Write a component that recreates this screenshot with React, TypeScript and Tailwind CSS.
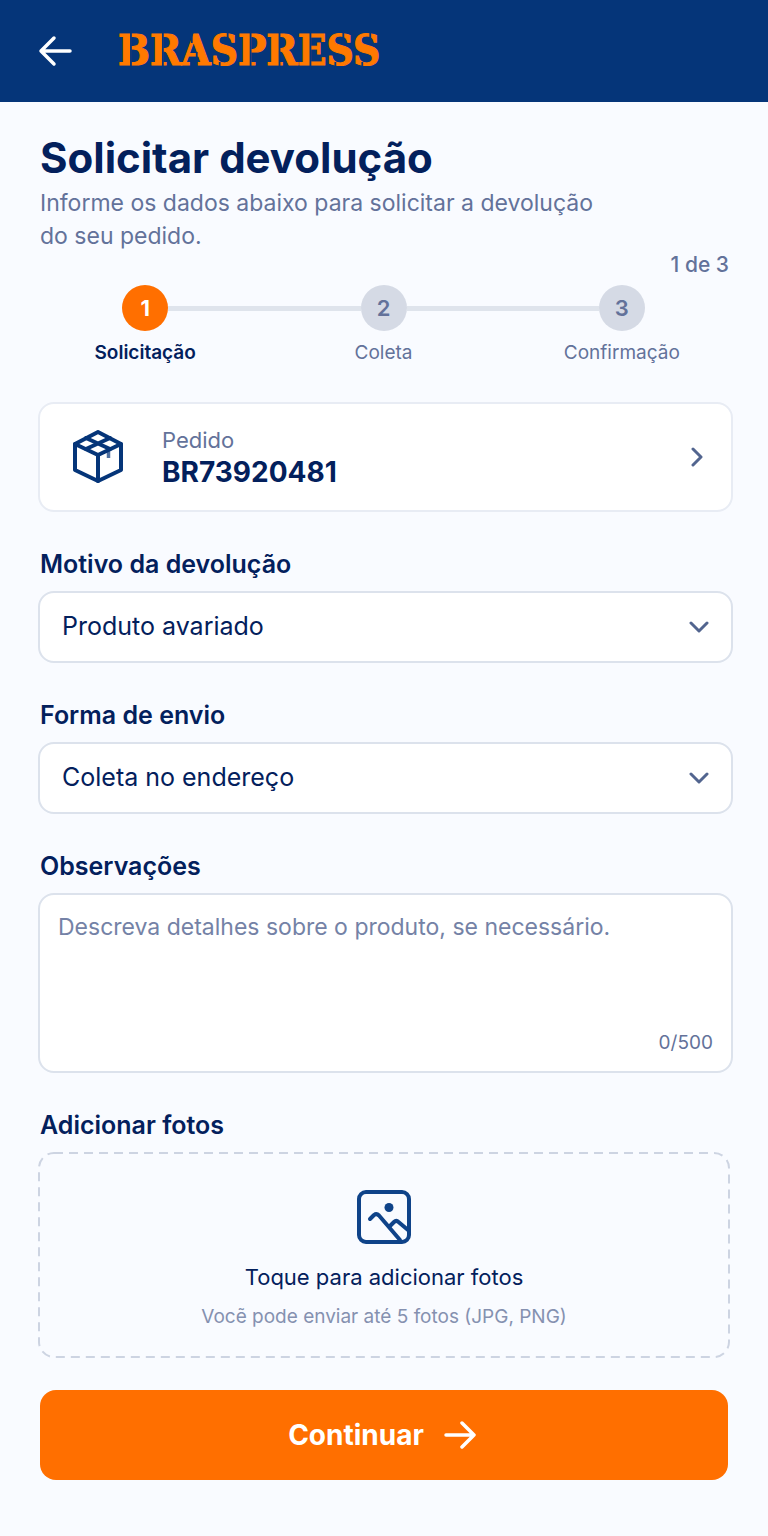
import { useState } from "react";
import type { ReactNode } from "react";

const STEPS = ["Solicitação", "Coleta", "Confirmação"];
const REASONS = ["Produto avariado", "Produto errado", "Arrependimento"];
const METHODS = ["Coleta no endereço", "Entrega na unidade"];
const MAX_NOTES = 500;

export default function App() {
  const [reason, setReason] = useState(REASONS[0]);
  const [method, setMethod] = useState(METHODS[0]);
  const [notes, setNotes] = useState("");

  return (
    <div className="min-h-screen bg-[#f9fbff] pb-14 font-['Inter',sans-serif] text-[#03205c]">
      <header className="flex h-[102px] items-center gap-[46px] bg-[#053579] px-9">
        <button type="button" aria-label="Voltar" className="text-white">
          <BackArrow />
        </button>
        <Wordmark />
      </header>

      <main className="pt-[30px] pr-[35px] pl-[38px]">
        <div className="pl-0.5">
          <h1 className="text-[42px] leading-[52px] font-bold">Solicitar devolução</h1>
          <p className="mt-[3px] max-w-[580px] text-[23px] leading-[33px] text-[#63729a]">
            Informe os dados abaixo para solicitar a devolução do seu pedido.
          </p>
        </div>

        <p className="pr-1 text-right text-[21px] leading-6 font-medium text-[#63729a]">1 de 3</p>
        <Stepper current={0} />

        <form onSubmit={(e) => e.preventDefault()}>
          <div className="mt-[37px] flex flex-col gap-9">
            <button
              type="button"
              className="flex h-[110px] items-center rounded-2xl border-2 border-[#e8ecf4] bg-white pr-7 pl-8 text-left"
            >
              <BoxIcon />
              <span className="ml-9 flex-1 pb-0.5">
                <span className="block text-[22px] leading-8 text-[#63729a]">Pedido</span>
                <span className="block text-[28px] leading-8 font-bold">BR73920481</span>
              </span>
              <Chevron className="h-5 w-3" d="M2 2l8 8-8 8" box="0 0 12 20" />
            </button>

            <Field id="reason" label="Motivo da devolução">
              <Select id="reason" value={reason} options={REASONS} onChange={setReason} />
            </Field>

            <Field id="method" label="Forma de envio">
              <Select id="method" value={method} options={METHODS} onChange={setMethod} />
            </Field>

            <Field id="notes" label="Observações">
              <div className="flex h-[180px] flex-col rounded-2xl border-2 border-[#dce2ec] bg-white px-[18px] pt-4 pb-4">
                <textarea
                  id="notes"
                  value={notes}
                  maxLength={MAX_NOTES}
                  onChange={(e) => setNotes(e.target.value)}
                  placeholder="Descreva detalhes sobre o produto, se necessário."
                  className="flex-1 resize-none text-[23px] leading-8 outline-none placeholder:text-[#7482a6]"
                />
                <span className="text-right text-[19px] leading-6 text-[#63729a]">
                  {notes.length}/{MAX_NOTES}
                </span>
              </div>
            </Field>

            <div className="mr-[3px]">
              <h2 className="mb-[11px] pl-0.5 text-[25px] leading-8 font-semibold">Adicionar fotos</h2>
              <label className="relative flex h-[206px] cursor-pointer flex-col items-center pt-[37px]">
                <svg className="absolute inset-0 size-full" fill="none" aria-hidden="true">
                  <rect
                    className="h-[calc(100%-2px)] w-[calc(100%-2px)]"
                    x="1"
                    y="1"
                    rx="15"
                    stroke="#cdd4e2"
                    strokeWidth="2"
                    strokeDasharray="9 6"
                  />
                </svg>
                <PhotoIcon />
                <span className="mt-4 text-[22px] leading-8">Toque para adicionar fotos</span>
                <span className="mt-3 text-[19px] leading-6 text-[#8591b0]">
                  Vocẽ pode enviar até 5 fotos (JPG, PNG)
                </span>
                <input type="file" accept="image/jpeg,image/png" multiple className="sr-only" />
              </label>
            </div>
          </div>

          <div className="mt-8 mr-[5px] ml-0.5">
            <button
              type="submit"
              className="flex h-[90px] w-full items-center justify-center gap-5 rounded-2xl bg-[#ff6f00] pr-1 text-[28px] font-bold text-white"
            >
              Continuar
              <svg className="h-7 w-8" viewBox="0 0 32 28" fill="none" stroke="currentColor" strokeWidth="3.500" strokeLinecap="round" strokeLinejoin="round">
                <path d="M2 14h28M18 2l12 12-12 12" />
              </svg>
            </button>
          </div>
        </form>
      </main>
    </div>
  );
}

function Stepper({ current }: { current: number }) {
  return (
    <ol className="mt-2 -mr-2 -ml-3 grid grid-cols-3">
      {STEPS.map((name, i) => {
        const active = i === current;
        return (
          <li key={name} className="flex flex-col items-center">
            <div className="flex w-full items-center">
              <span className={`h-[5px] flex-1 ${i > 0 ? "bg-[#dfe4ec]" : ""}`} />
              <span
                className={`flex size-[46px] items-center justify-center rounded-full text-[22px] ${
                  active ? "bg-[#ff6f00] font-bold text-white" : "bg-[#d5dae5] font-semibold text-[#63729a]"
                }`}
              >
                {i + 1}
              </span>
              <span className={`h-[5px] flex-1 ${i < STEPS.length - 1 ? "bg-[#dfe4ec]" : ""}`} />
            </div>
            <span className={`mt-[10px] text-[19px] leading-6 ${active ? "font-semibold" : "text-[#63729a]"}`}>
              {name}
            </span>
          </li>
        );
      })}
    </ol>
  );
}

function Field({ id, label, children }: { id: string; label: string; children: ReactNode }) {
  return (
    <div>
      <label htmlFor={id} className="mb-[11px] block pl-0.5 text-[25px] leading-8 font-semibold">
        {label}
      </label>
      {children}
    </div>
  );
}

interface SelectProps {
  id: string;
  value: string;
  options: string[];
  onChange: (v: string) => void;
}

function Select({ id, value, options, onChange }: SelectProps) {
  return (
    <div className="relative">
      <select
        id={id}
        value={value}
        onChange={(e) => onChange(e.target.value)}
        className="h-[72px] w-full appearance-none rounded-2xl border-2 border-[#dce2ec] bg-white px-[22px] text-[25px]"
      >
        {options.map((o) => (
          <option key={o}>{o}</option>
        ))}
      </select>
      <div className="pointer-events-none absolute inset-y-0 right-6 flex items-center">
        <Chevron className="h-3 w-5" d="M2 2l8 8 8-8" box="0 0 20 12" />
      </div>
    </div>
  );
}

function Chevron({ className, d, box }: { className: string; d: string; box: string }) {
  return (
    <svg className={className} viewBox={box} fill="none" stroke="#52658f" strokeWidth="3" strokeLinecap="round" strokeLinejoin="round">
      <path d={d} />
    </svg>
  );
}

function BackArrow() {
  return (
    <svg className="h-8 w-9" viewBox="0 0 36 32" fill="none" stroke="currentColor" strokeWidth="3.500" strokeLinecap="round" strokeLinejoin="round">
      <path d="M34 16H5M18 3L5 16l13 13" />
    </svg>
  );
}

// Stencil look: bold serif with header-coloured bridges cut over it.
function Wordmark() {
  return (
    <span className="relative font-['DejaVu_Serif_Condensed','DejaVu_Serif',serif] text-[42px] leading-[50px] font-bold text-[#ff7900] [-webkit-text-stroke:1px_#ff7900]">
      BRASPRESS
      <svg className="absolute inset-0 size-full" viewBox="0 0 263 50" fill="none" stroke="#053579" strokeWidth="1.800" aria-hidden="true">
        <path d="M13 6v38M45 6v38M133 6v38M162 6v38M193 6v38" />
        <path d="M74 5v12M79 26v7" />
        <path d="M110 6v8M102 36v8M226 6v8M218 36v8M253 6v8M245 36v8" />
      </svg>
    </span>
  );
}

function BoxIcon() {
  return (
    <svg className="h-[54px] w-[54px]" viewBox="0 0 54 54" fill="none" stroke="#053579" strokeWidth="4" strokeLinejoin="round" strokeLinecap="round">
      <path d="M26 2L49 14v26L26 51 3 40V14z" />
      <path d="M3 14l23 11 23-11M26 25v26" />
      <path d="M14 8l24 11M38 8L14 19" />
      <path d="M36.500 21v7" strokeWidth="3.500" strokeOpacity="0.700" strokeLinecap="butt" />
    </svg>
  );
}

function PhotoIcon() {
  return (
    <svg className="size-14" viewBox="0 0 56 56" fill="none" stroke="#0f4389" strokeWidth="4" strokeLinejoin="round" strokeLinecap="round">
      <rect x="3" y="3" width="50" height="50" rx="7" />
      <circle cx="33" cy="18.500" r="4.500" fill="#0f4389" stroke="none" />
      <path d="M14 30l4-4c2-1.500 3.500-1 5 .5L44 51" />
      <path d="M34 37l4-4c1.500-1.500 3-1.500 4.500 0L52 41" />
    </svg>
  );
}
